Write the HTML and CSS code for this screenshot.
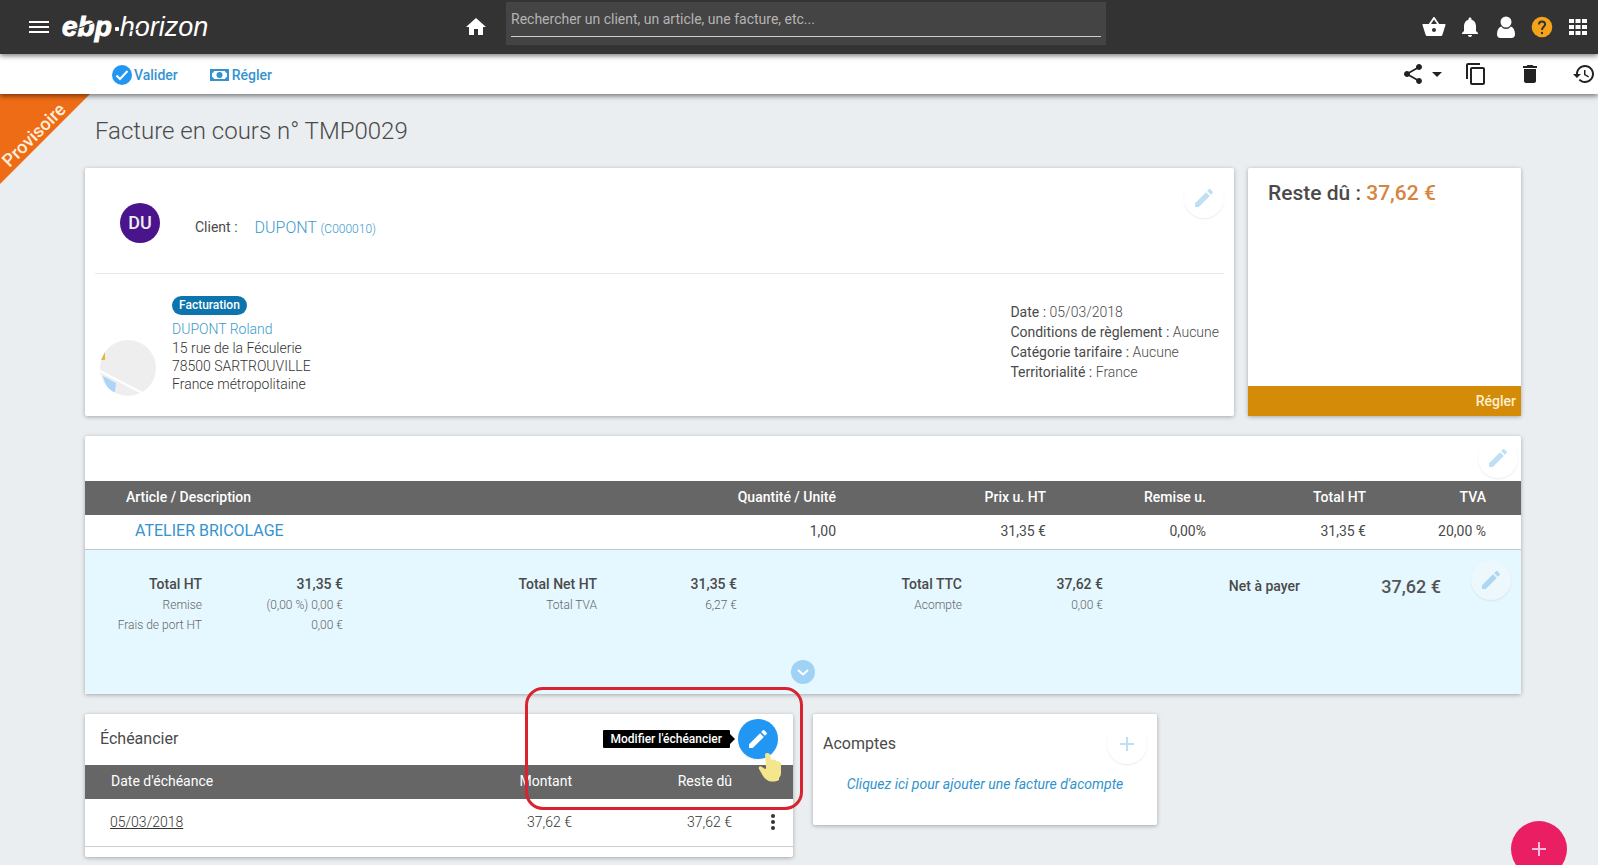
FILE: index.html
```html
<!DOCTYPE html>
<html lang="fr">
<head>
<meta charset="utf-8">
<meta name="viewport" content="width=device-width, initial-scale=1">
<title>Facture en cours n° TMP0029</title>
<link rel="stylesheet" href="styles.css">
</head>
<body>
<svg class="sprite" aria-hidden="true">
  <symbol id="i-edit" viewBox="0 0 24 24"><path d="M3 17.25V21h3.75L17.81 9.94l-3.75-3.75L3 17.25zM20.71 7.04c.39-.39.39-1.02 0-1.41l-2.34-2.34c-.39-.39-1.02-.39-1.41 0l-1.83 1.83 3.75 3.75 1.83-1.83z"/></symbol>
  <symbol id="i-add" viewBox="0 0 24 24"><path d="M19 13h-6v6h-2v-6H5v-2h6V5h2v6h6v2z"/></symbol>
</svg>

<header class="topbar">
  <div class="topbar-left">
    <button class="icon-btn" aria-label="Menu"><svg class="icon" viewBox="0 0 24 24"><path d="M2 18h20v-2H2v2zm0-5h20v-2H2v2zm0-7v2h20V6H2z"/></svg></button>
    <a class="logo" href="#"><b>ebp</b><i class="logo-dot"></i><span>horizon</span>
      <svg class="logo-cut" viewBox="0 0 148 34" aria-hidden="true"><path d="M5 21 Q20 18 36 11"/><path d="M64 22 Q74 21 84 15"/></svg>
    </a>
    <a class="home" href="#" aria-label="Accueil"><svg class="icon" viewBox="0 0 24 24"><path d="M10 20v-6h4v6h5v-8h3L12 3 2 12h3v8z"/></svg></a>
  </div>
  <form class="search">
    <input type="search" aria-label="Recherche" placeholder="Rechercher un client, un article, une facture, etc...">
  </form>
  <nav class="topbar-right">
    <button class="icon-btn" aria-label="Panier"><svg class="icon" viewBox="0 0 24 24"><path d="M17.21 9l-4.38-6.56c-.19-.28-.51-.42-.83-.42-.32 0-.64.14-.83.43L6.79 9H1c-.4 0-.6.45-.5 1l3 9.500c.23.84 1 1.500 1.500 1.500h14c.92 0 1.300-.62 1.500-1.500L23.500 10c.1-.55-.1-1-.5-1h-5.790zM9 9l3-4.400L15 9H9zm3 8c-1.100 0-2-.9-2-2s.9-2 2-2 2 .9 2 2-.9 2-2 2z"/></svg></button>
    <button class="icon-btn" aria-label="Notifications"><svg class="icon" viewBox="0 0 24 24"><path d="M12 22c1.100 0 2-.9 2-2h-4c0 1.100.89 2 2 2zm6-6v-5c0-3.070-1.640-5.640-4.500-6.320V4c0-.83-.67-1.500-1.500-1.500s-1.500.67-1.500 1.500v.68C7.630 5.360 6 7.920 6 11v5l-2 2v1h16v-1l-2-2z"/></svg></button>
    <button class="icon-btn" aria-label="Compte"><svg class="icon" viewBox="0 0 24 24"><circle cx="12" cy="7" r="5.500"/><path d="M7.200 11.500C8.400 13.200 10 14 12 14s3.600-.8 4.800-2.500c2.700 1 4.200 4 4.200 7.500 0 2.500-1.200 4-3.500 4h-11C4.200 23 3 21.500 3 19c0-3.500 1.500-6.500 4.200-7.500z"/></svg></button>
    <button class="icon-btn" aria-label="Aide"><svg class="icon" viewBox="0 0 24 24"><circle class="help-disc" cx="12" cy="12" r="10.300"/><path class="help-mark" d="M9 9.500C9 7.600 10.200 6.500 12 6.500s3.100 1.100 3.100 2.800C15.100 11.600 12 12 12 14.900"/><circle class="help-dot" cx="12" cy="18" r="1.200"/></svg></button>
    <button class="icon-btn" aria-label="Applications"><svg class="icon" viewBox="0 0 24 24"><path d="M3 8h5V4H3zM9.500 8h5V4h-5zM16 8h5V4h-5zM3 14h5v-4H3zM9.500 14h5v-4h-5zM16 14h5v-4h-5zM3 20h5v-4H3zM9.500 20h5v-4h-5zM16 20h5v-4h-5z"/></svg></button>
  </nav>
</header>

<div class="toolbar">
  <div class="toolbar-left">
    <button class="text-btn"><svg class="icon-20" viewBox="0 0 20 20"><circle class="check-disc" cx="10" cy="10" r="10"/><path class="check-mark" d="M4.500 10.500l3.500 3.500 7.500-8"/></svg>Valider</button>
    <button class="text-btn"><svg class="icon-20" viewBox="0 0 20 20"><path fill-rule="evenodd" d="M0 4h19v12H0zM4 6C4 7 3 8 2 8v4c1 0 2 1 2 2h11c0-1 1-2 2-2V8c-1 0-2-1-2-2z"/><circle cx="9.500" cy="10" r="3"/></svg>Régler</button>
  </div>
  <div class="toolbar-right">
    <button class="icon-btn" aria-label="Partager"><svg class="icon" viewBox="0 0 24 24"><path d="M18 16.080c-.76 0-1.440.3-1.960.77L8.910 12.700c.05-.23.09-.46.09-.7s-.04-.47-.09-.7l7.050-4.110c.54.5 1.250.81 2.040.81 1.660 0 3-1.340 3-3s-1.340-3-3-3-3 1.340-3 3c0 .24.04.47.09.7L8.040 9.810C7.500 9.310 6.790 9 6 9c-1.660 0-3 1.340-3 3s1.340 3 3 3c.79 0 1.500-.31 2.040-.81l7.120 4.160c-.05.21-.08.43-.08.65 0 1.610 1.310 2.920 2.920 2.920s2.920-1.310 2.920-2.920-1.310-2.920-2.920-2.920z"/></svg></button>
    <button class="icon-btn" aria-label="Options de partage"><svg class="icon" viewBox="0 0 24 24"><path d="M7 10l5 5 5-5z"/></svg></button>
    <button class="icon-btn spaced" aria-label="Dupliquer"><svg class="icon" viewBox="0 0 24 24"><path d="M16 1H4c-1.100 0-2 .9-2 2v14h2V3h12V1zm3 4H8c-1.100 0-2 .9-2 2v14c0 1.100.9 2 2 2h11c1.100 0 2-.9 2-2V7c0-1.100-.9-2-2-2zm0 16H8V7h11v14z"/></svg></button>
    <button class="icon-btn spaced" aria-label="Supprimer"><svg class="icon" viewBox="0 0 24 24"><path d="M6 19c0 1.100.9 2 2 2h8c1.100 0 2-.9 2-2V7H6v12zM19 4h-3.500l-1-1h-5l-1 1H5v2h14V4z"/></svg></button>
    <button class="icon-btn last" aria-label="Historique"><svg class="icon" viewBox="0 0 24 24"><path d="M13 3c-4.970 0-9 4.030-9 9H1l3.890 3.890.07.14L9 12H6c0-3.870 3.130-7 7-7s7 3.130 7 7-3.130 7-7 7c-1.930 0-3.680-.79-4.940-2.060l-1.420 1.420C8.270 19.990 10.510 21 13 21c4.970 0 9-4.030 9-9s-4.030-9-9-9zm-1 5v5l4.280 2.540.72-1.210-3.500-2.080V8H12z"/></svg></button>
  </div>
</div>

<main class="page">
  <div class="ribbon"><span>Provisoire</span></div>
  <h1>Facture en cours n° TMP0029</h1>

  <div class="row-top">
    <section class="card client">
      <div class="client-head">
        <span class="avatar">DU</span>
        <span class="client-label">Client :</span>
        <a class="client-name" href="#">DUPONT <small>(C000010)</small></a>
        <button class="round-btn" aria-label="Modifier le client"><svg class="icon"><use href="#i-edit"/></svg></button>
      </div>
      <div class="client-body">
        <svg class="map" viewBox="0 0 56 56" aria-hidden="true"><circle class="map-land" cx="28" cy="28" r="28"/><path class="map-gold" d="M1 20l4-8v8z"/><path class="map-water" d="M3 36l13 7-1 9C9 51 5 45 3 36z"/><path class="map-road" d="M0 31l42 22"/></svg>
        <div class="address">
          <span class="badge">Facturation</span>
          <a href="#">DUPONT Roland</a>
          <span>15 rue de la Féculerie</span>
          <span>78500 SARTROUVILLE</span>
          <span>France métropolitaine</span>
        </div>
        <div class="facts">
          <div>Date : <span>05/03/2018</span></div>
          <div>Conditions de règlement : <span>Aucune</span></div>
          <div>Catégorie tarifaire : <span>Aucune</span></div>
          <div>Territorialité : <span>France</span></div>
        </div>
      </div>
    </section>
    <section class="card due">
      <p>Reste dû : <span>37,62 €</span></p>
      <button class="due-pay">Régler</button>
    </section>
  </div>

  <section class="card lines">
    <div class="lines-bar"><button class="round-btn" aria-label="Modifier les lignes"><svg class="icon"><use href="#i-edit"/></svg></button></div>
    <table class="items">
      <colgroup><col><col class="w200"><col class="w210"><col class="w160"><col class="w160"><col class="w135"></colgroup>
      <thead><tr><th>Article / Description</th><th>Quantité / Unité</th><th>Prix u. HT</th><th>Remise u.</th><th>Total HT</th><th>TVA</th></tr></thead>
      <tbody><tr><td><a href="#">ATELIER BRICOLAGE</a></td><td>1,00</td><td>31,35 €</td><td>0,00%</td><td>31,35 €</td><td>20,00 %</td></tr></tbody>
    </table>
    <div class="totals">
      <div class="totals-grid">
        <div class="col"><b>Total HT</b><span>Remise</span><span>Frais de port HT</span></div>
        <div class="col"><b>31,35 €</b><span>(0,00 %) 0,00 €</span><span>0,00 €</span></div>
        <div class="col"><b>Total Net HT</b><span>Total TVA</span></div>
        <div class="col"><b>31,35 €</b><span>6,27 €</span></div>
        <div class="col"><b>Total TTC</b><span>Acompte</span></div>
        <div class="col"><b>37,62 €</b><span>0,00 €</span></div>
        <div class="col net"><b>Net à payer</b></div>
        <div class="col net"><b class="net-value">37,62 €</b></div>
        <div class="col-edit"><button class="round-btn tinted" aria-label="Modifier les totaux"><svg class="icon"><use href="#i-edit"/></svg></button></div>
      </div>
      <button class="expand" aria-label="Afficher le détail"><svg viewBox="0 0 24 24"><path d="M7 10l5 4.500 5-4.500"/></svg></button>
    </div>
  </section>

  <div class="row-bottom">
    <section class="card schedule">
      <div class="schedule-head">
        <h2>Échéancier</h2>
        <span class="tooltip" role="tooltip">Modifier l'échéancier</span>
        <button class="round-btn primary" aria-label="Modifier l'échéancier"><svg class="icon"><use href="#i-edit"/></svg></button>
      </div>
      <table class="dues">
        <colgroup><col><col class="w160"><col class="w160"><col class="w61"></colgroup>
        <thead><tr><th>Date d'échéance</th><th>Montant</th><th>Reste dû</th><th></th></tr></thead>
        <tbody><tr><td><a href="#">05/03/2018</a></td><td>37,62 €</td><td>37,62 €</td><td><button class="icon-btn" aria-label="Actions"><svg class="icon" viewBox="0 0 24 24"><circle cx="12" cy="6" r="2"/><circle cx="12" cy="12" r="2"/><circle cx="12" cy="18" r="2"/></svg></button></td></tr></tbody>
      </table>
      <div class="highlight"></div>
      <svg class="hand" viewBox="0 0 24 32" aria-hidden="true"><path d="M7 2c2-2 5-1 5 1l1 5c3-1 5 0 5.500 1.500C21 8.500 23 10 23 12v9c0 2-1 4-2 5v2c-4 2-9 2-12 0-1-1-3-2-4-4L1 17c-1-2 1-4 3-2l3 2c1 0 1-1 1-2z"/></svg>
    </section>
    <section class="card deposits">
      <div class="deposits-head">
        <h2>Acomptes</h2>
        <button class="round-btn" aria-label="Ajouter un acompte"><svg class="icon"><use href="#i-add"/></svg></button>
      </div>
      <a href="#">Cliquez ici pour ajouter une facture d'acompte</a>
    </section>
  </div>
</main>

<button class="fab" aria-label="Créer"><svg class="icon"><use href="#i-add"/></svg></button>
</body>
</html>
```
FILE: styles.css
```css
* { box-sizing: border-box; }

body {
  margin: 0;
  min-height: 100vh;
  background: #eaeef1;
  color: #4a4a4a;
  font-family: Roboto, "Liberation Sans", sans-serif;
  font-size: 14px;
  line-height: 20px;
}

h1, h2, p { margin: 0; }
a { color: #3c9aca; text-decoration: none; }
button { font: inherit; color: inherit; background: none; border: 0; padding: 0; cursor: pointer; }
.sprite { position: absolute; width: 0; height: 0; }
.icon { display: block; width: 24px; height: 24px; fill: currentColor; }
.icon-20 { display: block; width: 20px; height: 20px; fill: currentColor; }
.icon-btn { display: block; flex: none; }

/* Top bar */
.topbar {
  position: relative;
  z-index: 3;
  display: grid;
  grid-template-columns: 506fr 600fr 492fr;
  align-items: center;
  height: 54px;
  background: #333;
  color: #fff;
  box-shadow: 0 2px 5px rgba(0, 0, 0, .5);
}
.topbar-left { display: flex; align-items: center; padding-left: 27px; }
.logo {
  position: relative;
  display: flex;
  align-items: center;
  margin-left: 11px;
  color: #fff;
  font: italic 27px/34px "Liberation Sans", Arial, sans-serif;
}
.logo b { font-size: 28px; -webkit-text-stroke: 1px #fff; }
.logo-dot { width: 4px; height: 4px; margin: 4px 1px 0 3px; background: #fff; border-radius: 1px; }
.logo-cut { position: absolute; left: 0; top: 0; width: 148px; height: 34px; fill: none; stroke: #333; stroke-width: 1; }
.home { margin: 0 18px 0 auto; color: #fff; }
.search { align-self: start; margin-top: 2px; padding: 0 5px 8px; background: #444; }
.search input {
  display: block;
  width: 100%;
  height: 35px;
  padding: 0;
  border: 0;
  border-bottom: 1px solid #ccc;
  background: none;
  color: #fff;
  font: inherit;
}
.search input::placeholder { color: #b4b4b4; opacity: 1; }
.topbar-right { display: flex; justify-content: flex-end; gap: 12px; padding-right: 8px; }
.help-disc { fill: #f5a31a; }
.help-mark { fill: none; stroke: #333; stroke-width: 2; }
.help-dot { fill: #333; }

/* Action bar */
.toolbar {
  position: relative;
  z-index: 2;
  display: flex;
  justify-content: space-between;
  align-items: center;
  height: 40px;
  background: #fff;
  box-shadow: 0 2px 5px rgba(0, 0, 0, .5);
}
.toolbar-left { display: flex; gap: 32px; padding: 2px 0 0 112px; }
.text-btn { display: flex; align-items: center; gap: 2px; color: #3493cf; font-weight: 500; }
.check-disc { fill: #2196f3; }
.check-mark { fill: none; stroke: #fff; stroke-width: 2; }
.toolbar-right { display: flex; padding-right: 2px; color: #222; }
.spaced { padding: 0 15px; }
.last { margin-left: 15px; }

/* Page */
.page { position: relative; padding: 22px 77px 8px 85px; }
.ribbon {
  position: absolute;
  left: 0;
  top: 0;
  width: 90px;
  height: 90px;
  background: #ee6c15;
  clip-path: polygon(0 0, 100% 0, 0 100%);
}
.ribbon span {
  position: absolute;
  left: -20px;
  top: 31px;
  width: 108px;
  text-align: center;
  color: #ffeedd;
  font-size: 18px;
  font-weight: 500;
  transform: rotate(-45deg);
}
h1 { padding-left: 10px; margin-bottom: 22px; font-size: 24px; line-height: 30px; font-weight: 300; }
.card { position: relative; background: #fff; border-radius: 2px; box-shadow: 0 1px 4px rgba(0, 0, 0, .3); }

.round-btn {
  display: grid;
  place-items: center;
  flex: none;
  width: 40px;
  height: 40px;
  border-radius: 50%;
  background: #fff;
  color: #bfdff5;
  box-shadow: 0 1px 2px rgba(0, 0, 0, .08);
}
.round-btn.tinted { background: #edf8fd; color: #acd7f4; }
.round-btn.primary { background: #2196f3; color: #fff; }

.row-top { display: grid; grid-template-columns: 1149fr 273fr; gap: 14px; margin-bottom: 20px; }
.client { padding: 0 10px; }
.client-head { display: flex; align-items: center; height: 106px; padding-left: 25px; padding-top: 4px; border-bottom: 1px solid #e8e8e8; }
.avatar {
  width: 40px;
  height: 40px;
  border-radius: 50%;
  background: #4a148c;
  color: #eee;
  font-size: 18px;
  line-height: 40px;
  font-weight: 500;
  text-align: center;
}
.client-label { margin: 8px 17px 0 35px; }
.client-name { margin-top: 11px; font-size: 16px; font-weight: 300; }
.client-name small { font-size: 12px; }
.client-head .round-btn { align-self: flex-start; margin: 6px 0 0 auto; }
.client-body { display: flex; align-items: flex-start; padding: 22px 5px 20px; }
.map { width: 56px; height: 56px; margin-top: 44px; }
.map-land { fill: #eee; }
.map-gold { fill: #e8b83c; }
.map-water { fill: #aad4f8; }
.map-road { stroke: #fff; stroke-width: 2; }
.address { display: flex; flex-direction: column; align-items: flex-start; margin-left: 16px; line-height: 18px; font-weight: 300; color: #333; }
.address a { margin-bottom: 1px; }
.badge { margin-bottom: 5px; padding: 0 7px; border-radius: 10px; background: #0d74ad; color: #fff; font-size: 12px; line-height: 19px; font-weight: 500; }
.facts { margin: 6px 0 0 auto; }
.facts span { font-weight: 300; }
.due { display: flex; flex-direction: column; justify-content: space-between; }
.due p { padding: 10px 20px; font-size: 21px; line-height: 30px; font-weight: 500; }
.due p span { color: #d68440; }
.due-pay { height: 30px; padding: 0 5px; background: #d48b07; color: #fff0d0; font-weight: 500; text-align: right; }

/* Article lines */
.lines { margin-bottom: 20px; }
.lines-bar { display: flex; justify-content: flex-end; height: 45px; padding: 2px 3px 0; }
table { width: 100%; border-collapse: collapse; table-layout: fixed; }
th, td { padding: 0 20px; text-align: right; font-weight: 400; }
th { height: 34px; padding-bottom: 2px; background: #666; color: #fff; }
th:first-child, td:first-child { text-align: left; }
.w200 { width: 200px; }
.w210 { width: 210px; }
.w160 { width: 160px; }
.w135 { width: 135px; }
.w61 { width: 61px; }
.items th { font-weight: 500; }
.items td { height: 34px; padding-bottom: 1px; border-bottom: 1px solid #bfc8cc; }
.items th:first-child { padding-left: 41px; }
.items td:first-child { padding-left: 50px; }
.items th:last-child, .items td:last-child { padding-right: 35px; }
.items a { font-size: 16px; color: #3493cf; }
.totals { padding: 10px 0; background: #e5f7ff; }
.totals-grid {
  display: grid;
  grid-template-columns: 117fr 141fr 254fr 140fr 225fr 141fr 197fr 141fr 80fr;
  height: 90px;
}
.col { display: flex; flex-direction: column; align-items: flex-end; padding-top: 14px; color: #666; font-size: 12px; font-weight: 300; white-space: nowrap; }
.col b { color: #4a4a4a; font-size: 14px; line-height: 21px; font-weight: 500; }
.col.net { padding-top: 16px; }
.col .net-value { font-size: 18px; color: #555; }
.col-edit { display: flex; justify-content: flex-end; padding-right: 10px; }
.expand { display: block; width: 24px; height: 24px; margin: 10px auto 0; border-radius: 50%; background: #9fd2f5; }
.expand svg { display: block; fill: none; stroke: #fff; stroke-width: 2; }

/* Bottom cards */
.row-bottom { display: grid; grid-template-columns: 708fr 344fr 344fr; gap: 20px; align-items: start; }
h2 { font-size: 16px; line-height: 20px; font-weight: 400; }
.schedule { padding-bottom: 10px; }
.schedule-head { display: flex; align-items: center; height: 51px; padding: 0 15px; }
.tooltip {
  position: relative;
  margin: 0 8px 0 auto;
  padding: 0 8px;
  background: #000;
  color: #fff;
  font-size: 12px;
  line-height: 18px;
  font-weight: 500;
  border-radius: 1px;
}
.tooltip::after {
  content: "";
  position: absolute;
  left: 100%;
  top: 4px;
  border: 5px solid transparent;
  border-left-color: #000;
  border-right-width: 0;
}
.dues th, .dues td { padding-right: 0; }
.dues td { height: 48px; border-bottom: 1px solid #ccc; font-weight: 300; color: #333; }
.dues th:first-child { padding-left: 26px; }
.dues td:first-child { padding-left: 25px; }
.dues td:last-child { padding: 0 8px 0 29px; }
.dues a { color: #333; text-decoration: underline; }
.highlight {
  position: absolute;
  left: 440px;
  top: -27px;
  width: 278px;
  height: 123px;
  border: 3px solid #d9232e;
  border-radius: 18px;
  pointer-events: none;
}
.hand { position: absolute; right: 11px; top: 38px; width: 24px; height: 32px; fill: #f4e68c; }
.deposits { padding: 10px 10px 31px; }
.deposits-head { display: flex; align-items: center; justify-content: space-between; height: 40px; margin-bottom: 10px; }
.deposits a { display: block; text-align: center; font-style: italic; color: #2f93cb; }

.fab {
  position: fixed;
  right: 31px;
  bottom: -12px;
  display: grid;
  place-items: center;
  width: 56px;
  height: 56px;
  border-radius: 50%;
  background: #e91e63;
  color: #fbd;
}
```
